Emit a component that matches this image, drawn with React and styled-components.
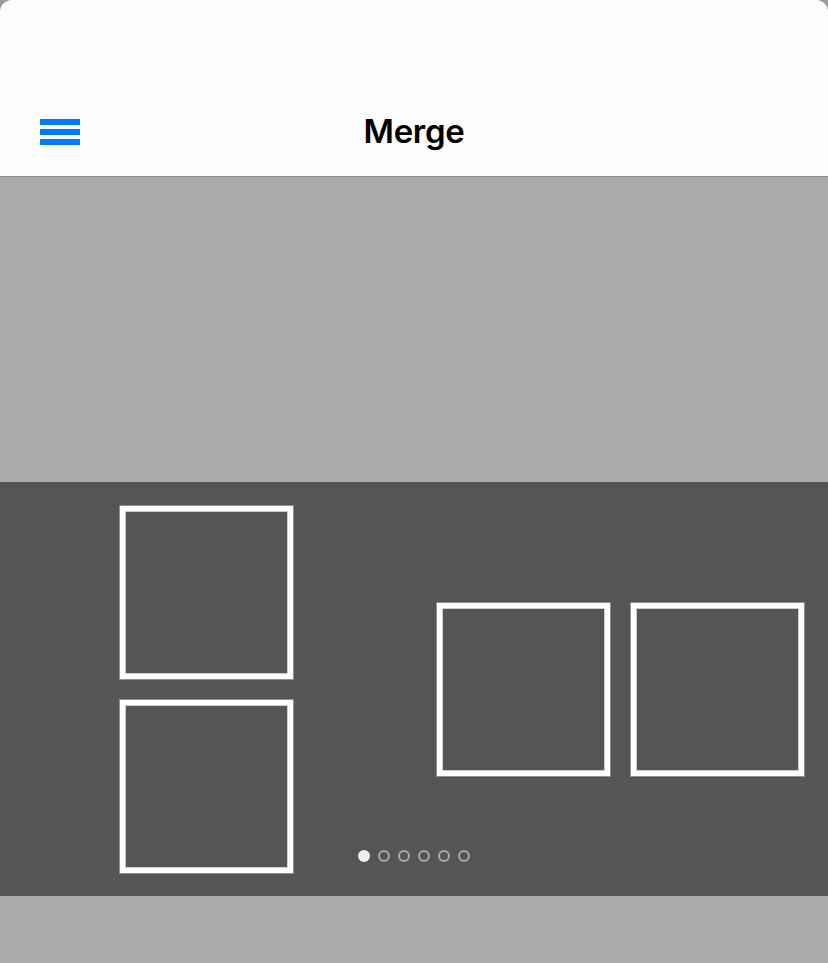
import React from 'react';
import styled, { createGlobalStyle } from 'styled-components';

const GlobalStyle = createGlobalStyle`
  html, body {
    margin: 0;
    padding: 0;
    background: #9a9a9a;
    font-family: Inter, "Noto Sans", sans-serif;
  }
`;

const Screen = styled.div`
  width: 828px;
  height: 963px;
  display: flex;
  flex-direction: column;
  background: #aaaaaa;
  border-radius: 12px 12px 0 0;
  overflow: hidden;
`;

const NavBar = styled.header`
  height: 177px;
  flex-shrink: 0;
  background: #fcfcfc;
  border-bottom: 1px solid #8a8a8a;
  display: grid;
  grid-template-columns: 1fr auto 1fr;
  align-items: end;
  padding: 0 40px 25px;
  box-sizing: border-box;
`;

const MenuButton = styled.button`
  justify-self: start;
  width: 40px;
  height: 26px;
  padding: 0;
  border: none;
  background: transparent;
  display: flex;
  flex-direction: column;
  justify-content: space-between;
  margin-bottom: 6px;
`;

const MenuBar = styled.span`
  display: block;
  height: 6px;
  background: #007aff;
`;

const Title = styled.h1`
  margin: 0;
  font-size: 33px;
  font-weight: 600;
  color: #000;
  letter-spacing: -0.3px;
  line-height: 40px;
`;

const Preview = styled.div`
  height: 305px;
  flex-shrink: 0;
  background: #aaaaaa;
`;

const Pager = styled.section`
  position: relative;
  height: 414px;
  flex-shrink: 0;
  background: #555555;
  display: flex;
  align-items: center;
  padding-left: 120px;
  box-sizing: border-box;
`;

const Stack = styled.div`
  display: flex;
  flex-direction: ${p => (p.$row ? 'row' : 'column')};
  gap: ${p => p.$gap}px;
  margin-left: ${p => p.$offset || 0}px;
`;

const Slot = styled.div`
  width: 173px;
  height: 173px;
  box-sizing: border-box;
  border: 5px solid #ffffff;
  box-shadow: 0 0 0 1px rgba(255, 255, 255, 0.35), inset 0 0 0 1px #cfcfcf;
  background: #555555;
`;

const Dots = styled.div`
  position: absolute;
  left: 0;
  right: 0;
  bottom: 34px;
  display: flex;
  justify-content: center;
  gap: 8px;
`;

const Dot = styled.span`
  width: 12px;
  height: 12px;
  box-sizing: border-box;
  border-radius: 50%;
  background: ${p => (p.$active ? '#eeeeee' : 'transparent')};
  border: ${p => (p.$active ? 'none' : '2px solid #a8a8a8')};
`;

const Footer = styled.div`
  flex: 1;
  background: #aaaaaa;
`;

export default function App() {
  return (
    <>
      <GlobalStyle />
      <Screen>
        <NavBar>
          <MenuButton aria-label="Menu">
            <MenuBar />
            <MenuBar />
            <MenuBar />
          </MenuButton>
          <Title>Merge</Title>
          <span />
        </NavBar>
        <Preview />
        <Pager>
          <Stack $gap={21}>
            <Slot />
            <Slot />
          </Stack>
          <Stack $row $gap={21} $offset={144}>
            <Slot />
            <Slot />
          </Stack>
          <Dots>
            {[0, 1, 2, 3, 4, 5].map(i => (
              <Dot key={i} $active={i === 0} />
            ))}
          </Dots>
        </Pager>
        <Footer />
      </Screen>
    </>
  );
}
